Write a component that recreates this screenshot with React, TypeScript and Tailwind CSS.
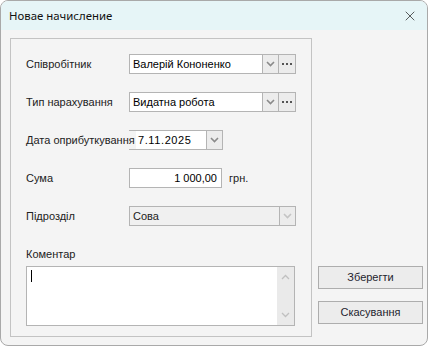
import { X } from 'lucide-react'

const font = "font-['Liberation_Sans',Arial,sans-serif]"

function Chevron({ muted = false }: { muted?: boolean }) {
  return (
    <svg width="9" height="6" viewBox="0 0 9 6" className={muted ? 'text-[#c4c4c4]' : 'text-[#8a8a8a]'}>
      <path d="M1 1 L4.5 4.5 L8 1" fill="none" stroke="currentColor" strokeWidth="1.6" />
    </svg>
  )
}

function DropBtn({ muted = false }: { muted?: boolean }) {
  return (
    <div className="flex h-full w-[16px] items-center justify-center border-l border-[#b4b4b4] bg-[#ececec]">
      <Chevron muted={muted} />
    </div>
  )
}

function DotsBtn() {
  return (
    <div className="flex h-full w-[17px] items-center justify-center gap-[2px] border-l border-[#b4b4b4] bg-[#ececec]">
      <span className="h-[2px] w-[2px] bg-[#555]" />
      <span className="h-[2px] w-[2px] bg-[#555]" />
      <span className="h-[2px] w-[2px] bg-[#555]" />
    </div>
  )
}

function Row({ label, children }: { label: string; children: React.ReactNode }) {
  return (
    <div className="flex h-[20px] items-center">
      <div className="w-[103px] text-[11px] text-[#222]">{label}</div>
      {children}
    </div>
  )
}

export default function App() {
  return (
    <div
      className={`${font} flex h-[346px] w-[428px] flex-col overflow-hidden rounded-[8px] border border-[#a9a9a9] bg-[#f4f4f4]`}
    >
      <div className="flex h-[29px] shrink-0 items-center justify-between bg-[#e6f5f7] pl-[8px] pr-[9px]">
        <span className="font-['Noto_Sans',sans-serif] text-[11.4px] text-[#111]">Новае начисление</span>
        <X className="h-[16px] w-[16px] text-[#222]" strokeWidth={1.1} />
      </div>

      <div className="flex pl-[9px] pt-[8px]">
        <div className="flex h-[299px] w-[302px] flex-col border border-[#c3c3c3] pl-[15px] pt-[15px]">
          <div className="flex flex-col gap-[18px]">
            <Row label="Співробітник">
              <div className="flex h-[20px] w-[167px] border border-[#b4b4b4] bg-white">
                <span className="flex-1 pl-[3px] text-[11px] leading-[18px] text-black">Валерій Кононенко</span>
                <DropBtn />
                <DotsBtn />
              </div>
            </Row>
            <Row label="Тип нарахування">
              <div className="flex h-[20px] w-[167px] border border-[#b4b4b4] bg-white">
                <span className="flex-1 pl-[3px] text-[11px] leading-[18px] text-black">Видатна робота</span>
                <DropBtn />
                <DotsBtn />
              </div>
            </Row>
            <div className="relative flex h-[20px] items-center">
              <div className="w-[103px]" />
              <div className="flex h-[20px] w-[94px] border border-[#b4b4b4] bg-white">
                <span className="flex-1 pl-[8px] text-[11px] leading-[18px] tracking-[0.6px] text-black">7.11.2025</span>
                <DropBtn />
              </div>
              <span className="absolute left-0 top-[1px] z-10 bg-[#f4f4f4] pr-[1px] text-[11px] leading-[18px] text-[#222]">
                Дата оприбуткування
              </span>
            </div>
            <Row label="Сума">
              <div className="h-[20px] w-[93px] border border-[#b4b4b4] bg-white pr-[4px] text-right text-[11px] leading-[18px] text-black">
                1 000,00
              </div>
              <span className="ml-[7px] text-[11px] text-[#222]">грн.</span>
            </Row>
            <Row label="Підрозділ">
              <div className="flex h-[20px] w-[167px] border border-[#b4b4b4] bg-[#f0f0f0]">
                <span className="flex-1 pl-[3px] text-[11px] leading-[18px] text-[#222]">Сова</span>
                <DropBtn muted />
              </div>
            </Row>
          </div>

          <div className="mt-[21px] text-[11px] leading-[14px] text-[#222]">Коментар</div>
          <div className="mt-[5px] flex h-[60px] w-[269px] border border-[#b4b4b4] bg-white">
            <div className="flex-1 pl-[4px] pt-[3px]">
              <div className="h-[12px] w-px bg-black" />
            </div>
            <div className="flex w-[17px] flex-col items-center justify-between bg-[#eaeaea] py-[7px]">
              <svg width="9" height="6" viewBox="0 0 9 6" className="text-[#c0c0c0]">
                <path d="M1 5 L4.5 1.5 L8 5" fill="none" stroke="currentColor" strokeWidth="1.3" />
              </svg>
              <svg width="9" height="6" viewBox="0 0 9 6" className="text-[#c0c0c0]">
                <path d="M1 1 L4.5 4.5 L8 1" fill="none" stroke="currentColor" strokeWidth="1.3" />
              </svg>
            </div>
          </div>
        </div>

        <div className="ml-[6px] flex w-[105px] flex-col gap-[12px] pt-[228px]">
          <button className="h-[23px] border border-[#adadad] bg-[#ececec] text-[11px] text-[#1e1e2e]">Зберегти</button>
          <button className="h-[23px] border border-[#adadad] bg-[#ececec] text-[11px] text-[#1e1e2e]">Скасування</button>
        </div>
      </div>
    </div>
  )
}
